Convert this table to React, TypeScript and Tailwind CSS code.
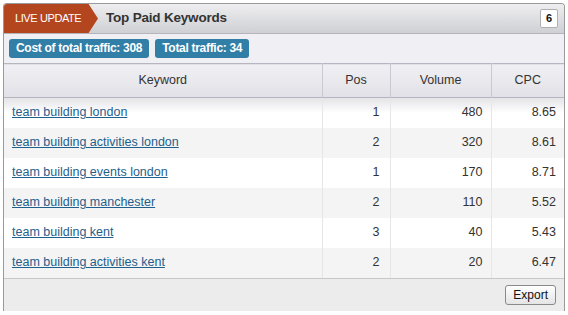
const rows = [
  { keyword: "team building london", pos: 1, volume: 480, cpc: "8.65" },
  { keyword: "team building activities london", pos: 2, volume: 320, cpc: "8.61" },
  { keyword: "team building events london", pos: 1, volume: 170, cpc: "8.71" },
  { keyword: "team building manchester", pos: 2, volume: 110, cpc: "5.52" },
  { keyword: "team building kent", pos: 3, volume: 40, cpc: "5.43" },
  { keyword: "team building activities kent", pos: 2, volume: 20, cpc: "6.47" },
];

const headCell =
  "h-[34px] border-l border-[#c9c9d1] text-center text-[12.5px] font-normal text-[#333]";
const numCell = "border-l border-[#e6e6e6] pr-[8px] text-right text-[12.5px] text-[#333]";

export default function App() {
  return (
    <div className="h-[315px] w-[568px] bg-white pl-[3px] pr-[3px] pt-[3px] font-['Liberation_Sans',Arial,sans-serif]">
      <div className="overflow-hidden rounded-t-[4px] border border-b-0 border-[#9a9a9a] bg-[#ececec]">
        {/* title bar */}
        <div className="flex h-[30px] items-center border-b border-[#b4b4ba] bg-gradient-to-b from-[#eeeef0] to-[#cfd0d4]">
          <div className="flex h-full w-[94px] items-center bg-[#b4461f] pl-[11px] text-[11px] tracking-[-0.4px] text-white [clip-path:polygon(0_0,90%_0,100%_50%,90%_100%,0_100%)]">
            LIVE UPDATE
          </div>
          <h1 className="ml-[8px] text-[13.5px] font-bold tracking-[-0.2px] text-[#333]">Top Paid Keywords</h1>
          <span className="ml-auto mr-[6px] flex h-[19px] w-[18px] items-center justify-center rounded-[2px] border border-[#b0b0b0] bg-white text-[11px] font-bold text-[#111]">
            6
          </span>
        </div>

        {/* stats */}
        <div className="flex h-[29px] items-center gap-[6px] bg-[#f0f0f4] pl-[5px]">
          <span className="rounded-[3px] bg-[#317ea7] px-[7px] py-[3px] text-[12px] leading-[13px] font-bold tracking-[-0.3px] text-white">
            Cost of total traffic: 308
          </span>
          <span className="rounded-[3px] bg-[#317ea7] px-[7px] py-[3px] text-[12px] leading-[13px] font-bold tracking-[-0.3px] text-white">
            Total traffic: 34
          </span>
        </div>

        <table className="w-full table-fixed border-collapse">
          <colgroup>
            <col className="w-[318px]" />
            <col className="w-[68px]" />
            <col className="w-[101px]" />
            <col />
          </colgroup>
          <thead className="border-y border-[#b6b6c0] bg-gradient-to-b from-[#f0f0f4] to-[#e1e1e7]">
            <tr>
              <th className={headCell + " border-l-0"}>Keyword</th>
              <th className={headCell}>Pos</th>
              <th className={headCell}>Volume</th>
              <th className={headCell}>CPC</th>
            </tr>
          </thead>
          <tbody>
            {rows.map((r, i) => (
              <tr
                key={r.keyword}
                className={
                  "h-[30px] " +
                  (i === 0
                    ? "bg-gradient-to-b from-[#e4e4e8] via-white to-white"
                    : i % 2 === 1
                      ? "bg-[#f4f4f4]"
                      : "bg-white")
                }
              >
                <td className="pl-[8px] text-[12.5px]">
                  <a href="#" className="text-[#1f5f8c] underline">
                    {r.keyword}
                  </a>
                </td>
                <td className={numCell + " pr-[10px]"}>{r.pos}</td>
                <td className={numCell}>{r.volume}</td>
                <td className={numCell}>{r.cpc}</td>
              </tr>
            ))}
          </tbody>
        </table>

        {/* footer */}
        <div className="flex h-[33px] items-center justify-end border-t border-[#c8c8c8] bg-[#ececec] pr-[8px]">
          <button className="h-[20px] rounded-[3px] border border-[#8a8a8a] bg-gradient-to-b from-white to-[#e4e4e4] px-[7px] text-[12px] text-[#111]">
            Export
          </button>
        </div>
      </div>
    </div>
  );
}
